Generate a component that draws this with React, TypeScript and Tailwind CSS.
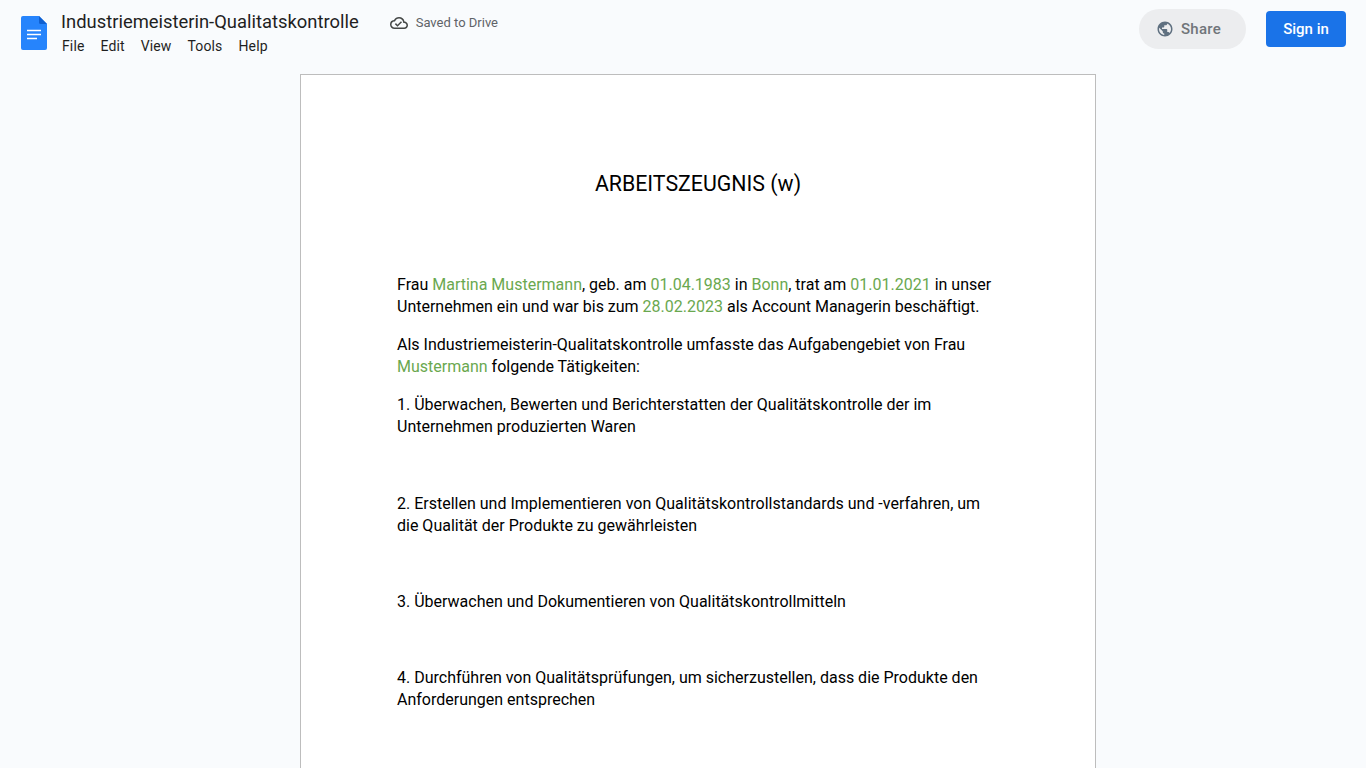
import { MdOutlineCloudDone, MdPublic } from "react-icons/md";

const menu_items = ["File", "Edit", "View", "Tools", "Help"];

const Mark = ({ children }: { children: React.ReactNode }) => (
  <span className="text-[#6aa84f]">{children}</span>
);

const DocsLogo = () => (
  <svg width="26" height="34" viewBox="0 0 26 34" className="shrink-0">
    <path d="M2 0h16l8 8v24a2 2 0 0 1-2 2H2a2 2 0 0 1-2-2V2a2 2 0 0 1 2-2z" fill="#2684fc" />
    <path d="M18 0l8 8h-6.5A1.5 1.5 0 0 1 18 6.5z" fill="#0f5fd0" />
    <path d="M6 14.5h14M6 18.5h14M6 22.5h10" stroke="#fff" strokeWidth="1.7" />
  </svg>
);

export default function App() {
  return (
    <div className="h-screen overflow-hidden bg-[#f9fbfd] font-['Roboto',sans-serif] text-black">
      <header className="flex h-[74px] items-start justify-between pr-5">
        <div className="flex">
          <div className="ml-[21px] mt-4">
            <DocsLogo />
          </div>
          <div className="ml-[14px]">
            <div className="flex items-center">
              <h1 className="mt-[10px] text-[18.4px] leading-[24px] text-[#1f1f1f]">
                Industriemeisterin-Qualitatskontrolle
              </h1>
              <div className="ml-[31px] mt-[12px] flex items-center gap-2 text-[13px] leading-[16px] text-[#5f6368]">
                <MdOutlineCloudDone size={18} className="text-[#444746]" />
                <span>Saved to Drive</span>
              </div>
            </div>
            <nav className="mt-[2px] ml-px flex gap-4 text-sm leading-[20px] tracking-[0.13px] text-[#1f1f1f]">
              {menu_items.map((item) => (
                <span key={item}>{item}</span>
              ))}
            </nav>
          </div>
        </div>
        <div className="flex items-center gap-5 pt-[9px]">
          <button className="flex h-10 w-[107px] items-center justify-center gap-[7px] rounded-full bg-[#ecedef] pr-2 text-[15px] font-medium tracking-[0.3px] text-[#70757a]">
            <MdPublic size={18} className="text-[#5f7080]" />
            Share
          </button>
          <button className="h-9 w-20 rounded bg-[#1a73e8] text-[15px] font-medium text-white">Sign in</button>
        </div>
      </header>

      <main className="ml-[300px] h-[800px] w-[796px] border border-[#bdbdbd] bg-white px-24 text-base leading-[22px]">
        <h2 className="mt-[95px] text-center text-[21.33px] leading-[28px]">ARBEITSZEUGNIS (w)</h2>
        <p className="mt-[76px]">
          Frau <Mark>Martina Mustermann</Mark>, geb. am <Mark>01.04.1983</Mark> in <Mark>Bonn</Mark>, trat am{" "}
          <Mark>01.01.2021</Mark> in unser Unternehmen ein und war bis zum <Mark>28.02.2023</Mark> als Account
          Managerin beschäftigt.
        </p>
        <p className="mt-4">
          Als Industriemeisterin-Qualitatskontrolle umfasste das Aufgabengebiet von Frau <Mark>Mustermann</Mark>{" "}
          folgende Tätigkeiten:
        </p>
        <p className="mt-4">
          1. Überwachen, Bewerten und Berichterstatten der Qualitätskontrolle der im Unternehmen produzierten Waren
        </p>
        <p className="mt-[55px]">
          2. Erstellen und Implementieren von Qualitätskontrollstandards und -verfahren, um die Qualität der Produkte
          zu gewährleisten
        </p>
        <p className="mt-[54px]">3. Überwachen und Dokumentieren von Qualitätskontrollmitteln</p>
        <p className="mt-[54px]">
          4. Durchführen von Qualitätsprüfungen, um sicherzustellen, dass die Produkte den Anforderungen entsprechen
        </p>
      </main>
    </div>
  );
}
